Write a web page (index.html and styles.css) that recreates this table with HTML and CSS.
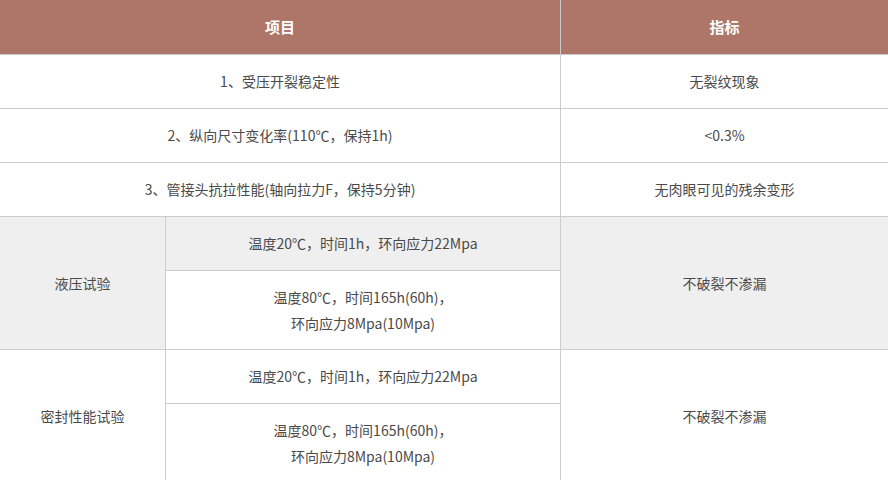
FILE: index.html
```html
<!DOCTYPE html>
<html lang="zh-CN">
<head>
<meta charset="utf-8">
<link rel="stylesheet" href="styles.css">
</head>
<body>
<table class="spec">
  <colgroup>
    <col class="c1">
    <col class="c2">
    <col class="c3">
  </colgroup>
  <thead>
    <tr class="r-head">
      <th colspan="2">项目</th>
      <th>指标</th>
    </tr>
  </thead>
  <tbody>
    <tr class="r1">
      <td colspan="2">1、受压开裂稳定性</td>
      <td>无裂纹现象</td>
    </tr>
    <tr class="r1">
      <td colspan="2">2、纵向尺寸变化率(110℃，保持1h)</td>
      <td>&lt;0.3%</td>
    </tr>
    <tr class="r1">
      <td colspan="2">3、管接头抗拉性能(轴向拉力F，保持5分钟)</td>
      <td>无肉眼可见的残余变形</td>
    </tr>
    <tr class="r1 gray">
      <td rowspan="2">液压试验</td>
      <td>温度20℃，时间1h，环向应力22Mpa</td>
      <td rowspan="2">不破裂不渗漏</td>
    </tr>
    <tr class="r2">
      <td class="white">温度80℃，时间165h(60h)，<br>环向应力8Mpa(10Mpa)</td>
    </tr>
    <tr class="r1">
      <td rowspan="2">密封性能试验</td>
      <td>温度20℃，时间1h，环向应力22Mpa</td>
      <td rowspan="2">不破裂不渗漏</td>
    </tr>
    <tr class="r2">
      <td>温度80℃，时间165h(60h)，<br>环向应力8Mpa(10Mpa)</td>
    </tr>
  </tbody>
</table>
</body>
</html>
```

FILE: styles.css
```css
html, body {
  margin: 0;
  padding: 0;
  background: #ffffff;
}
body {
  font-family: "Noto Sans CJK SC", "Noto Sans", sans-serif;
  overflow: hidden;
}
.spec {
  border-collapse: collapse;
  width: 889px;
  margin-left: -1px;
  table-layout: fixed;
}
.c1 { width: 166px; }
.c2 { width: 395px; }
.c3 { width: 328px; }
.spec th,
.spec td {
  border: 1px solid #cccccc;
  text-align: center;
  vertical-align: middle;
  padding: 0;
  font-size: 14px;
  line-height: 26px;
  color: #4a4a4a;
}
.spec th {
  background: #ad7668;
  color: #ffffff;
  font-size: 15px;
  font-weight: bold;
  border-top: none;
}
.r-head { height: 54px; }
.r1 { height: 54px; }
.r2 { height: 79px; }
.gray td { background: #efefef; }
.spec td.white { background: #ffffff; }
```
